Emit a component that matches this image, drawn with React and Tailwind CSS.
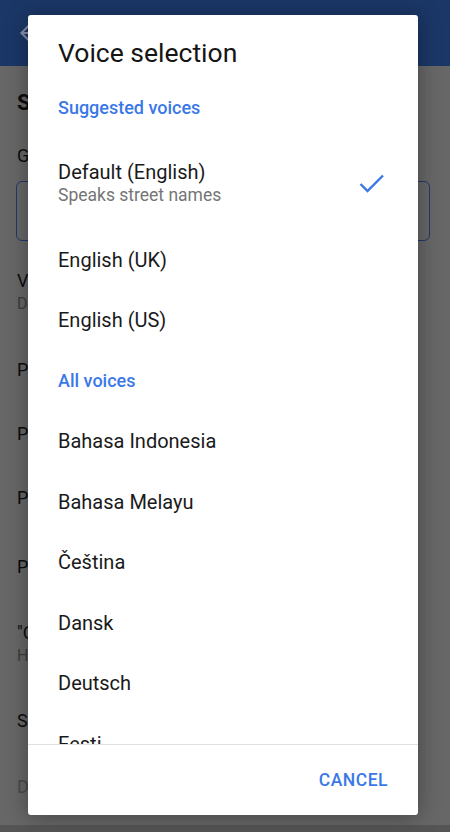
import React from "react";

const font = { fontFamily: "Roboto, 'Noto Sans', sans-serif" };

function Row({ children }) {
  return <div className="h-[60.5px] flex items-center px-[30px] shrink-0">{children}</div>;
}

function Header({ children }) {
  return (
    <Row>
      <span className="text-[18px] font-medium text-[#3b78e7]">{children}</span>
    </Row>
  );
}

function Item({ children }) {
  return (
    <Row>
      <span className="text-[20px] text-[#1a1a1a]">{children}</span>
    </Row>
  );
}

function Toggle() {
  return <div className="absolute right-[25px] w-[20px] h-[20px] rounded-full bg-[#1b3a6e]" />;
}

export default function App() {
  return (
    <div className="relative w-[450px] h-[832px] overflow-hidden bg-[#676767]" style={font}>
      {/* background page */}
      <div className="flex flex-col h-full">
        <div className="h-[66px] bg-[#1b3767] flex items-center px-[16px] shrink-0">
          <svg width="24" height="24" viewBox="0 0 24 24" fill="#8492ab">
            <path d="M20 11H7.83l5.59-5.59L12 4l-8 8 8 8 1.41-1.41L7.83 13H20v-2z" />
          </svg>
        </div>
        <div className="flex-1 flex flex-col px-[17px] text-[#0c0c0c]">
          <div className="pt-[20px] h-[56px] text-[22px] font-bold">Sound &amp; voice</div>
          <div className="mt-[20px] text-[18px]">Guidance volume</div>
          <div className="mt-[12px] h-[60px] w-[414px] -ml-[1px] rounded-[6px] border-[1.5px] border-[#1f3a6b]" />
          <div className="mt-[28px] text-[18px] leading-[24px]">Voice selection</div>
          <div className="text-[16px] leading-[22px] text-[#3c3c3c]">Default (English)</div>
          <div className="relative mt-[42px] flex items-center text-[18px] h-[24px]">
            Play voice over Bluetooth
            <Toggle />
          </div>
          <div className="relative mt-[40px] flex items-center text-[18px] h-[24px]">
            Play voice during phone calls
            <Toggle />
          </div>
          <div className="relative mt-[40px] flex items-center text-[18px] h-[24px]">
            Play audio cues
            <Toggle />
          </div>
          <div className="mt-[44px] text-[18px] h-[24px]">Play test sound</div>
          <div className="mt-[44px] text-[18px] leading-[24px]">"OK Google" detection</div>
          <div className="text-[16px] leading-[22px] text-[#3c3c3c]">Hands-free while navigating</div>
          <div className="mt-[40px] text-[18px] h-[24px]">Show on map</div>
          <div className="mt-[42px] text-[18px] h-[24px] text-[#4a4a4a]">Driving options</div>
        </div>
        <div className="h-[7px] bg-[#555555] shrink-0" />
      </div>

      {/* dialog */}
      <div className="absolute left-[28px] top-[15px] w-[390px] h-[800px] bg-white rounded-[3px] shadow-[0_2px_22px_rgba(0,0,0,0.35)] flex flex-col overflow-hidden">
        <div className="pt-[23px] pb-[9px] px-[30px] shrink-0">
          <div className="text-[26.5px] leading-[30px] text-[#151515]">Voice selection</div>
        </div>
        <div className="flex-1 flex flex-col overflow-hidden">
          <Header>Suggested voices</Header>
          <div className="h-[92px] flex items-center justify-between px-[30px] shrink-0">
            <div className="flex flex-col">
              <span className="text-[20px] leading-[23px] text-[#1a1a1a]">Default (English)</span>
              <span className="text-[17.5px] leading-[23px] text-[#757575]">Speaks street names</span>
            </div>
            <svg width="26" height="20" viewBox="0 0 26 20" className="mr-[3px]">
              <polyline points="1.5,10 8.5,17 24,1.5" fill="none" stroke="#3b78e7" strokeWidth="2.4" />
            </svg>
          </div>
          <Item>English (UK)</Item>
          <Item>English (US)</Item>
          <Header>All voices</Header>
          <Item>Bahasa Indonesia</Item>
          <Item>Bahasa Melayu</Item>
          <Item>Čeština</Item>
          <Item>Dansk</Item>
          <Item>Deutsch</Item>
          <Item>Eesti</Item>
          <Item>English (Australia)</Item>
        </div>
        <div className="h-[71px] shrink-0 border-t border-[#e0e0e0] flex items-center justify-end pr-[30px]">
          <span className="text-[17.5px] font-medium tracking-[0.5px] text-[#3b78e7]">CANCEL</span>
        </div>
      </div>
    </div>
  );
}
